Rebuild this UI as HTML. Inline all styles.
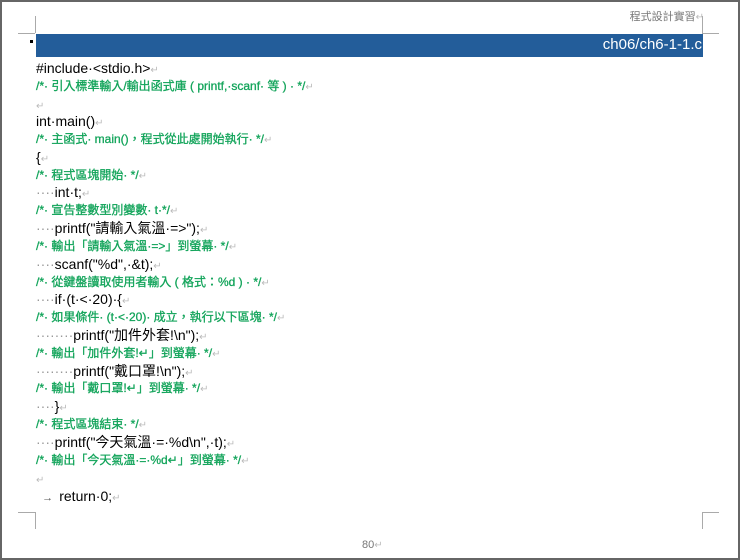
<!DOCTYPE html><html><head><meta charset="utf-8"><style>
body{margin:0;width:740px;height:560px;overflow:hidden;background:#fff;font-family:"Liberation Sans","Noto Sans CJK TC",sans-serif}
.pg{position:absolute;left:0;top:0;width:736px;height:556px;border:2px solid #666;border-bottom-color:#666}
.m{position:absolute;background:#aaa}
.l{position:absolute;left:36px;white-space:pre;font-size:14px;color:#000;line-height:18px}
.c{color:#12a45a;font-size:12px;font-weight:normal;-webkit-text-stroke:0.3px #12a45a}
.r{color:#bbb;font-size:10px;-webkit-text-stroke:0}
</style></head><body><div class="pg"></div>
<div class="m" style="left:35px;top:16px;width:1px;height:17px"></div>
<div class="m" style="left:18px;top:33px;width:17px;height:1px"></div>
<div class="m" style="left:702px;top:16px;width:1px;height:17px"></div>
<div class="m" style="left:702px;top:33px;width:17px;height:1px"></div>
<div class="m" style="left:18px;top:512px;width:17px;height:1px"></div>
<div class="m" style="left:35px;top:512px;width:1px;height:17px"></div>
<div class="m" style="left:702px;top:512px;width:17px;height:1px"></div>
<div class="m" style="left:702px;top:512px;width:1px;height:17px"></div>
<div style="position:absolute;right:36px;top:8px;font-size:11px;color:#777">程式設計實習<span class="r">↵</span></div>
<div style="position:absolute;left:36px;top:34px;width:667px;height:23px;background:#235d9a"></div>
<div style="position:absolute;left:30px;top:40px;width:3px;height:3px;background:#000"></div>
<div style="position:absolute;right:38px;top:36px;font-size:15px;color:#fff">ch06/ch6-1-1.c</div>
<div class="l" style="top:59px">#include·&lt;stdio.h&gt;<span class="r">↵</span></div>
<div class="l c" style="top:77px">/*· 引入標準輸入/輸出函式庫 ( printf,·scanf· 等 ) · */<span class="r">↵</span></div>
<div class="l" style="top:95px"><span class="r">↵</span></div>
<div class="l" style="top:112px">int·main()<span class="r">↵</span></div>
<div class="l c" style="top:130px">/*· 主函式· main()，程式從此處開始執行· */<span class="r">↵</span></div>
<div class="l" style="top:148px">{<span class="r">↵</span></div>
<div class="l c" style="top:166px">/*· 程式區塊開始· */<span class="r">↵</span></div>
<div class="l" style="top:183px"><span style="color:#999">····</span>int·t;<span class="r">↵</span></div>
<div class="l c" style="top:201px">/*· 宣告整數型別變數· t·*/<span class="r">↵</span></div>
<div class="l" style="top:219px"><span style="color:#999">····</span>printf("請輸入氣溫·=&gt;");<span class="r">↵</span></div>
<div class="l c" style="top:237px">/*· 輸出「請輸入氣溫·=&gt;」到螢幕· */<span class="r">↵</span></div>
<div class="l" style="top:255px"><span style="color:#999">····</span>scanf("%d",·&amp;t);<span class="r">↵</span></div>
<div class="l c" style="top:273px">/*· 從鍵盤讀取使用者輸入 ( 格式：%d ) · */<span class="r">↵</span></div>
<div class="l" style="top:290px"><span style="color:#999">····</span>if·(t·&lt;·20)·{<span class="r">↵</span></div>
<div class="l c" style="top:308px">/*· 如果條件· (t·&lt;·20)· 成立，執行以下區塊· */<span class="r">↵</span></div>
<div class="l" style="top:326px"><span style="color:#999">········</span>printf("加件外套!\n");<span class="r">↵</span></div>
<div class="l c" style="top:344px">/*· 輸出「加件外套!↵」到螢幕· */<span class="r">↵</span></div>
<div class="l" style="top:362px"><span style="color:#999">········</span>printf("戴口罩!\n");<span class="r">↵</span></div>
<div class="l c" style="top:379px">/*· 輸出「戴口罩!↵」到螢幕· */<span class="r">↵</span></div>
<div class="l" style="top:397px"><span style="color:#999">····</span>}<span class="r">↵</span></div>
<div class="l c" style="top:415px">/*· 程式區塊結束· */<span class="r">↵</span></div>
<div class="l" style="top:433px"><span style="color:#999">····</span>printf("今天氣溫·=·%d\n",·t);<span class="r">↵</span></div>
<div class="l c" style="top:451px">/*· 輸出「今天氣溫·=·%d↵」到螢幕· */<span class="r">↵</span></div>
<div class="l" style="top:469px"><span class="r">↵</span></div>
<div class="l" style="top:487px"><span style="color:#555;font-size:11px">  →  </span>return·0;<span class="r">↵</span></div>
<div style="position:absolute;left:362px;top:539px;font-size:11px;color:#777">80<span class="r">↵</span></div>
</body></html>
